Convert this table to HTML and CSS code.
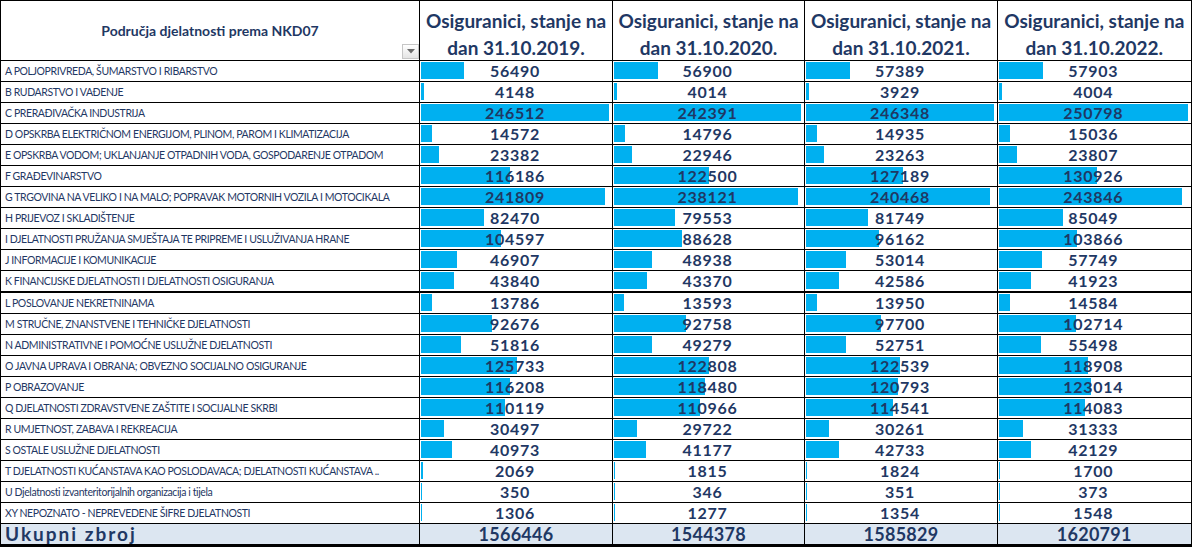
FILE: index.html
```html
<!DOCTYPE html>
<html lang="hr">
<head>
<meta charset="utf-8">
<title>Osiguranici po djelatnostima</title>
<link rel="stylesheet" href="styles.css">
</head>
<body>
<table class="sheet">
  <colgroup>
    <col class="c-label">
    <col class="c-y1">
    <col class="c-y2">
    <col class="c-y3">
    <col class="c-y4">
  </colgroup>
  <thead>
    <tr class="head-row">
      <th class="h-label">Područja djelatnosti prema NKD07<span class="filter-btn"><svg viewBox="0 0 8 5" width="8" height="5"><path d="M0 0h8L4 4.5z" fill="#6b6b6b"/></svg></span></th>
      <th class="h-year"><div class="h-inner">Osiguranici, stanje na<br>dan 31.10.2019.</div></th>
      <th class="h-year"><div class="h-inner">Osiguranici, stanje na<br>dan 31.10.2020.</div></th>
      <th class="h-year"><div class="h-inner">Osiguranici, stanje na<br>dan 31.10.2021.</div></th>
      <th class="h-year"><div class="h-inner">Osiguranici, stanje na<br>dan 31.10.2022.</div></th>
    </tr>
  </thead>
  <tbody>
    <tr class="row"><td class="label">A POLJOPRIVREDA, ŠUMARSTVO I RIBARSTVO</td>
      <td class="val"><div class="cell"><div class="bar" style="width:22.92%"></div><span class="num">56490</span></div></td>
      <td class="val"><div class="cell"><div class="bar" style="width:23.47%"></div><span class="num">56900</span></div></td>
      <td class="val"><div class="cell"><div class="bar" style="width:23.30%"></div><span class="num">57389</span></div></td>
      <td class="val"><div class="cell"><div class="bar" style="width:23.09%"></div><span class="num">57903</span></div></td></tr>
    <tr class="row"><td class="label">B RUDARSTVO I VAĐENJE</td>
      <td class="val"><div class="cell"><div class="bar" style="width:1.68%"></div><span class="num">4148</span></div></td>
      <td class="val"><div class="cell"><div class="bar" style="width:1.66%"></div><span class="num">4014</span></div></td>
      <td class="val"><div class="cell"><div class="bar" style="width:1.59%"></div><span class="num">3929</span></div></td>
      <td class="val"><div class="cell"><div class="bar" style="width:1.60%"></div><span class="num">4004</span></div></td></tr>
    <tr class="row"><td class="label">C PRERAĐIVAČKA INDUSTRIJA</td>
      <td class="val"><div class="cell"><div class="bar" style="width:100%"></div><span class="num">246512</span></div></td>
      <td class="val"><div class="cell"><div class="bar" style="width:100%"></div><span class="num">242391</span></div></td>
      <td class="val"><div class="cell"><div class="bar" style="width:100%"></div><span class="num">246348</span></div></td>
      <td class="val"><div class="cell"><div class="bar" style="width:100%"></div><span class="num">250798</span></div></td></tr>
    <tr class="row"><td class="label">D OPSKRBA ELEKTRIČNOM ENERGIJOM, PLINOM, PAROM I KLIMATIZACIJA</td>
      <td class="val"><div class="cell"><div class="bar" style="width:5.91%"></div><span class="num">14572</span></div></td>
      <td class="val"><div class="cell"><div class="bar" style="width:6.10%"></div><span class="num">14796</span></div></td>
      <td class="val"><div class="cell"><div class="bar" style="width:6.06%"></div><span class="num">14935</span></div></td>
      <td class="val"><div class="cell"><div class="bar" style="width:6.00%"></div><span class="num">15036</span></div></td></tr>
    <tr class="row"><td class="label">E OPSKRBA VODOM; UKLANJANJE OTPADNIH VODA, GOSPODARENJE OTPADOM</td>
      <td class="val"><div class="cell"><div class="bar" style="width:9.49%"></div><span class="num">23382</span></div></td>
      <td class="val"><div class="cell"><div class="bar" style="width:9.47%"></div><span class="num">22946</span></div></td>
      <td class="val"><div class="cell"><div class="bar" style="width:9.44%"></div><span class="num">23263</span></div></td>
      <td class="val"><div class="cell"><div class="bar" style="width:9.49%"></div><span class="num">23807</span></div></td></tr>
    <tr class="row"><td class="label">F GRAĐEVINARSTVO</td>
      <td class="val"><div class="cell"><div class="bar" style="width:47.13%"></div><span class="num">116186</span></div></td>
      <td class="val"><div class="cell"><div class="bar" style="width:50.54%"></div><span class="num">122500</span></div></td>
      <td class="val"><div class="cell"><div class="bar" style="width:51.63%"></div><span class="num">127189</span></div></td>
      <td class="val"><div class="cell"><div class="bar" style="width:52.20%"></div><span class="num">130926</span></div></td></tr>
    <tr class="row"><td class="label">G TRGOVINA NA VELIKO I NA MALO; POPRAVAK MOTORNIH VOZILA I MOTOCIKALA</td>
      <td class="val"><div class="cell"><div class="bar" style="width:98.09%"></div><span class="num">241809</span></div></td>
      <td class="val"><div class="cell"><div class="bar" style="width:98.24%"></div><span class="num">238121</span></div></td>
      <td class="val"><div class="cell"><div class="bar" style="width:97.61%"></div><span class="num">240468</span></div></td>
      <td class="val"><div class="cell"><div class="bar" style="width:97.23%"></div><span class="num">243846</span></div></td></tr>
    <tr class="row"><td class="label">H PRIJEVOZ I SKLADIŠTENJE</td>
      <td class="val"><div class="cell"><div class="bar" style="width:33.45%"></div><span class="num">82470</span></div></td>
      <td class="val"><div class="cell"><div class="bar" style="width:32.82%"></div><span class="num">79553</span></div></td>
      <td class="val"><div class="cell"><div class="bar" style="width:33.18%"></div><span class="num">81749</span></div></td>
      <td class="val"><div class="cell"><div class="bar" style="width:33.91%"></div><span class="num">85049</span></div></td></tr>
    <tr class="row"><td class="label">I DJELATNOSTI PRUŽANJA SMJEŠTAJA TE PRIPREME I USLUŽIVANJA HRANE</td>
      <td class="val"><div class="cell"><div class="bar" style="width:42.43%"></div><span class="num">104597</span></div></td>
      <td class="val"><div class="cell"><div class="bar" style="width:36.56%"></div><span class="num">88628</span></div></td>
      <td class="val"><div class="cell"><div class="bar" style="width:39.04%"></div><span class="num">96162</span></div></td>
      <td class="val"><div class="cell"><div class="bar" style="width:41.41%"></div><span class="num">103866</span></div></td></tr>
    <tr class="row"><td class="label">J INFORMACIJE I KOMUNIKACIJE</td>
      <td class="val"><div class="cell"><div class="bar" style="width:19.03%"></div><span class="num">46907</span></div></td>
      <td class="val"><div class="cell"><div class="bar" style="width:20.19%"></div><span class="num">48938</span></div></td>
      <td class="val"><div class="cell"><div class="bar" style="width:21.52%"></div><span class="num">53014</span></div></td>
      <td class="val"><div class="cell"><div class="bar" style="width:23.03%"></div><span class="num">57749</span></div></td></tr>
    <tr class="row row-thick"><td class="label">K FINANCIJSKE DJELATNOSTI I DJELATNOSTI OSIGURANJA</td>
      <td class="val"><div class="cell"><div class="bar" style="width:17.78%"></div><span class="num">43840</span></div></td>
      <td class="val"><div class="cell"><div class="bar" style="width:17.89%"></div><span class="num">43370</span></div></td>
      <td class="val"><div class="cell"><div class="bar" style="width:17.29%"></div><span class="num">42586</span></div></td>
      <td class="val"><div class="cell"><div class="bar" style="width:16.72%"></div><span class="num">41923</span></div></td></tr>
    <tr class="row"><td class="label">L POSLOVANJE NEKRETNINAMA</td>
      <td class="val"><div class="cell"><div class="bar" style="width:5.59%"></div><span class="num">13786</span></div></td>
      <td class="val"><div class="cell"><div class="bar" style="width:5.61%"></div><span class="num">13593</span></div></td>
      <td class="val"><div class="cell"><div class="bar" style="width:5.66%"></div><span class="num">13950</span></div></td>
      <td class="val"><div class="cell"><div class="bar" style="width:5.82%"></div><span class="num">14584</span></div></td></tr>
    <tr class="row"><td class="label">M STRUČNE, ZNANSTVENE I TEHNIČKE DJELATNOSTI</td>
      <td class="val"><div class="cell"><div class="bar" style="width:37.59%"></div><span class="num">92676</span></div></td>
      <td class="val"><div class="cell"><div class="bar" style="width:38.27%"></div><span class="num">92758</span></div></td>
      <td class="val"><div class="cell"><div class="bar" style="width:39.66%"></div><span class="num">97700</span></div></td>
      <td class="val"><div class="cell"><div class="bar" style="width:40.95%"></div><span class="num">102714</span></div></td></tr>
    <tr class="row"><td class="label">N ADMINISTRATIVNE I POMOĆNE USLUŽNE DJELATNOSTI</td>
      <td class="val"><div class="cell"><div class="bar" style="width:21.02%"></div><span class="num">51816</span></div></td>
      <td class="val"><div class="cell"><div class="bar" style="width:20.33%"></div><span class="num">49279</span></div></td>
      <td class="val"><div class="cell"><div class="bar" style="width:21.41%"></div><span class="num">52751</span></div></td>
      <td class="val"><div class="cell"><div class="bar" style="width:22.13%"></div><span class="num">55498</span></div></td></tr>
    <tr class="row"><td class="label">O JAVNA UPRAVA I OBRANA; OBVEZNO SOCIJALNO OSIGURANJE</td>
      <td class="val"><div class="cell"><div class="bar" style="width:51.00%"></div><span class="num">125733</span></div></td>
      <td class="val"><div class="cell"><div class="bar" style="width:50.66%"></div><span class="num">122808</span></div></td>
      <td class="val"><div class="cell"><div class="bar" style="width:49.74%"></div><span class="num">122539</span></div></td>
      <td class="val"><div class="cell"><div class="bar" style="width:47.41%"></div><span class="num">118908</span></div></td></tr>
    <tr class="row"><td class="label">P OBRAZOVANJE</td>
      <td class="val"><div class="cell"><div class="bar" style="width:47.14%"></div><span class="num">116208</span></div></td>
      <td class="val"><div class="cell"><div class="bar" style="width:48.88%"></div><span class="num">118480</span></div></td>
      <td class="val"><div class="cell"><div class="bar" style="width:49.03%"></div><span class="num">120793</span></div></td>
      <td class="val"><div class="cell"><div class="bar" style="width:49.05%"></div><span class="num">123014</span></div></td></tr>
    <tr class="row"><td class="label">Q DJELATNOSTI ZDRAVSTVENE ZAŠTITE I SOCIJALNE SKRBI</td>
      <td class="val"><div class="cell"><div class="bar" style="width:44.67%"></div><span class="num">110119</span></div></td>
      <td class="val"><div class="cell"><div class="bar" style="width:45.78%"></div><span class="num">110966</span></div></td>
      <td class="val"><div class="cell"><div class="bar" style="width:46.50%"></div><span class="num">114541</span></div></td>
      <td class="val"><div class="cell"><div class="bar" style="width:45.49%"></div><span class="num">114083</span></div></td></tr>
    <tr class="row"><td class="label">R UMJETNOST, ZABAVA I REKREACIJA</td>
      <td class="val"><div class="cell"><div class="bar" style="width:12.37%"></div><span class="num">30497</span></div></td>
      <td class="val"><div class="cell"><div class="bar" style="width:12.26%"></div><span class="num">29722</span></div></td>
      <td class="val"><div class="cell"><div class="bar" style="width:12.28%"></div><span class="num">30261</span></div></td>
      <td class="val"><div class="cell"><div class="bar" style="width:12.49%"></div><span class="num">31333</span></div></td></tr>
    <tr class="row"><td class="label">S OSTALE USLUŽNE DJELATNOSTI</td>
      <td class="val"><div class="cell"><div class="bar" style="width:16.62%"></div><span class="num">40973</span></div></td>
      <td class="val"><div class="cell"><div class="bar" style="width:16.99%"></div><span class="num">41177</span></div></td>
      <td class="val"><div class="cell"><div class="bar" style="width:17.35%"></div><span class="num">42733</span></div></td>
      <td class="val"><div class="cell"><div class="bar" style="width:16.80%"></div><span class="num">42129</span></div></td></tr>
    <tr class="row"><td class="label">T DJELATNOSTI KUĆANSTAVA KAO POSLODAVACA; DJELATNOSTI KUĆANSTAVA ..</td>
      <td class="val"><div class="cell"><div class="bar" style="width:0.84%"></div><span class="num">2069</span></div></td>
      <td class="val"><div class="cell"><div class="bar" style="width:0.75%"></div><span class="num">1815</span></div></td>
      <td class="val"><div class="cell"><div class="bar" style="width:0.74%"></div><span class="num">1824</span></div></td>
      <td class="val"><div class="cell"><div class="bar" style="width:0.68%"></div><span class="num">1700</span></div></td></tr>
    <tr class="row"><td class="label">U Djelatnosti izvanteritorijalnih organizacija i tijela</td>
      <td class="val"><div class="cell"><div class="bar" style="width:0.14%"></div><span class="num">350</span></div></td>
      <td class="val"><div class="cell"><div class="bar" style="width:0.14%"></div><span class="num">346</span></div></td>
      <td class="val"><div class="cell"><div class="bar" style="width:0.14%"></div><span class="num">351</span></div></td>
      <td class="val"><div class="cell"><div class="bar" style="width:0.15%"></div><span class="num">373</span></div></td></tr>
    <tr class="row"><td class="label">XY NEPOZNATO - NEPREVEDENE ŠIFRE DJELATNOSTI</td>
      <td class="val"><div class="cell"><div class="bar" style="width:0.53%"></div><span class="num">1306</span></div></td>
      <td class="val"><div class="cell"><div class="bar" style="width:0.53%"></div><span class="num">1277</span></div></td>
      <td class="val"><div class="cell"><div class="bar" style="width:0.55%"></div><span class="num">1354</span></div></td>
      <td class="val"><div class="cell"><div class="bar" style="width:0.62%"></div><span class="num">1548</span></div></td></tr>
  </tbody>
  <tfoot>
    <tr class="total">
      <td class="total-label">Ukupni zbroj</td>
      <td class="total-val">1566446</td>
      <td class="total-val">1544378</td>
      <td class="total-val">1585829</td>
      <td class="total-val">1620791</td>
    </tr>
  </tfoot>
</table>
</body>
</html>
```

FILE: styles.css
```css
html, body {
  margin: 0;
  padding: 0;
  background: #ffffff;
}

body {
  font-family: "Lato", "Open Sans", "Liberation Sans", sans-serif;
  color: #1f3864;
}

.sheet {
  border-collapse: collapse;
  table-layout: fixed;
  width: 1191px;
  border-top: 1px solid #000;
  border-left: 1px solid #000;
  border-right: 2px solid #000;
  border-bottom: 3px solid #000;
}

.c-label { width: 419px; }
.c-y1 { width: 193px; }
.c-y2 { width: 192px; }
.c-y3 { width: 193px; }
.c-y4 { width: 194px; }

.sheet th,
.sheet td {
  border: 1px solid #000;
  padding: 0;
}

.head-row {
  height: 60px;
}

.h-label {
  position: relative;
  font-size: 14px;
  font-weight: 700;
  color: #1f3864;
  text-align: center;
  vertical-align: middle;
  padding-top: 3px;
}

.filter-btn {
  position: absolute;
  right: 0;
  bottom: 1px;
  width: 17px;
  height: 15px;
  box-sizing: border-box;
  border: 1px solid #c6c6c6;
  background: linear-gradient(#ffffff, #e4e4e4);
  display: flex;
  align-items: center;
  justify-content: center;
}

.h-year {
  vertical-align: top;
}

.h-inner {
  height: 58px;
  box-sizing: border-box;
  padding-top: 6px;
  font-size: 19px;
  font-weight: 700;
  line-height: 27px;
  color: #1f3864;
  text-align: center;
  white-space: nowrap;
}

.row {
  height: 21px;
}

.row-thick td {
  border-bottom-width: 2px;
}

.label {
  font-size: 10.5px;
  letter-spacing: -0.4px;
  color: #1f3864;
  padding-left: 4px !important;
  white-space: nowrap;
  overflow: hidden;
  vertical-align: middle;
}

.val {
  padding: 0 3px 0 1px !important;
  vertical-align: top;
}

.cell {
  display: grid;
  height: 20px;
}

.bar {
  grid-area: 1 / 1;
  align-self: start;
  height: 17px;
  margin-top: 1px;
  background: #00b0f0;
}

.num {
  grid-area: 1 / 1;
  align-self: center;
  text-align: center;
  font-size: 16px;
  font-weight: 700;
  letter-spacing: 0.7px;
  color: #1f3864;
  line-height: 20px;
}

.total {
  height: 22px;
  background: #dce6f1;
}

.total-label,
.total-val {
  line-height: 20px;
}

.total-label {
  font-size: 19px;
  font-weight: 700;
  letter-spacing: 2px;
  padding-left: 4px !important;
  color: #1f3864;
}

.total-val {
  font-size: 18px;
  font-weight: 700;
  text-align: center;
  letter-spacing: 0.3px;
  color: #1f3864;
}
```
